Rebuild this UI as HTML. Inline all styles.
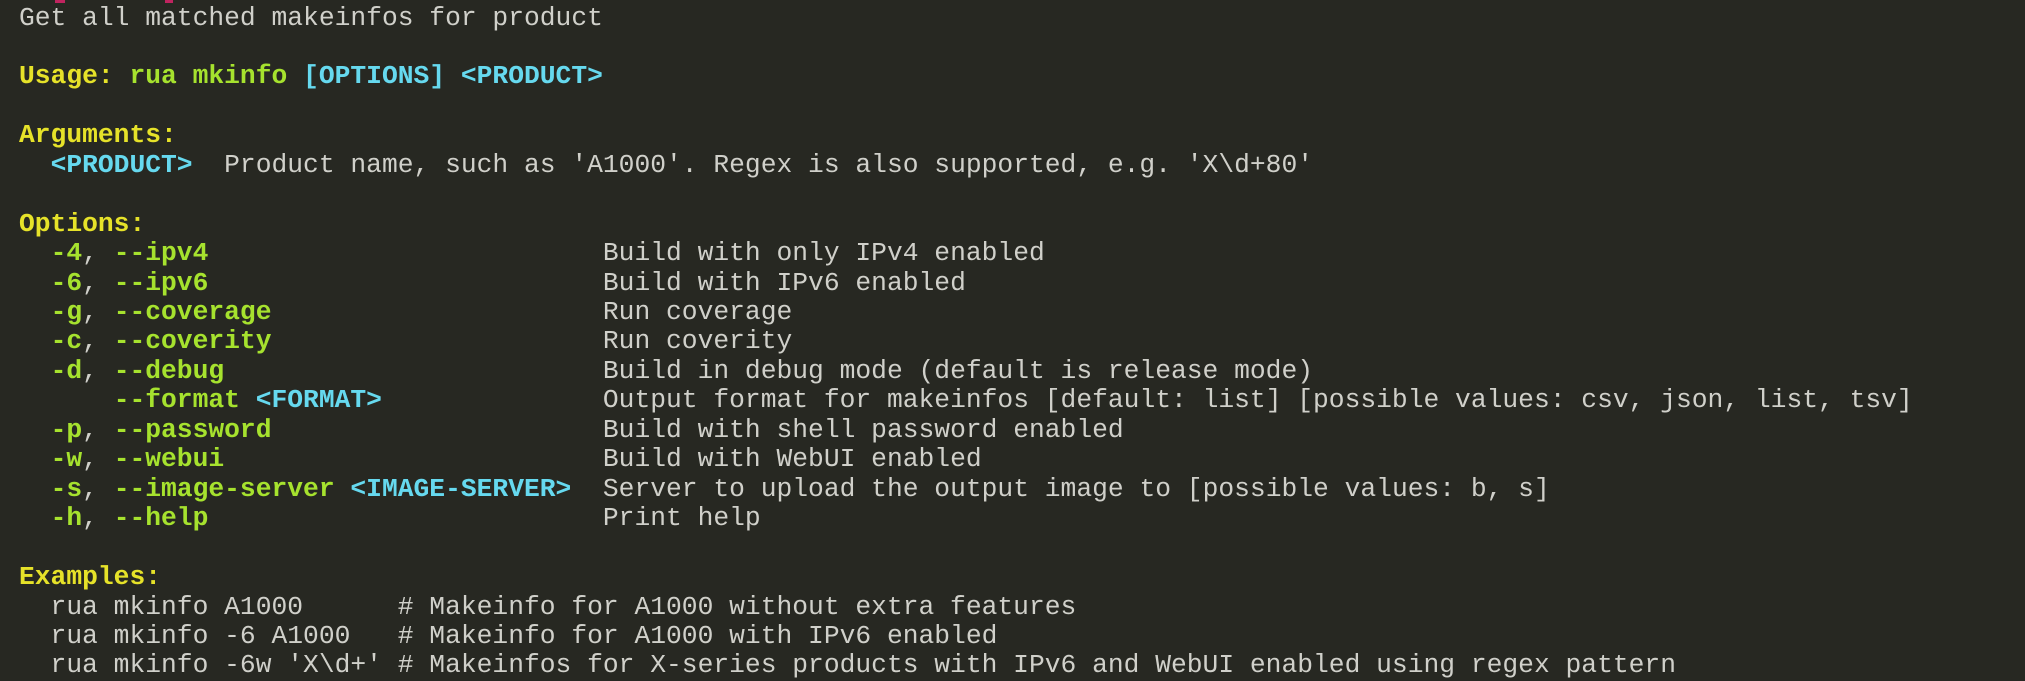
<!DOCTYPE html>
<html><head><meta charset="utf-8"><style>
html,body{margin:0;padding:0;background:#272822;width:2025px;height:679px;overflow:hidden}
pre{margin:0;position:absolute;left:19px;top:3.5px;font-family:"Liberation Mono",monospace;font-size:26.3px;line-height:29.45px;color:#d0d0ca}
.y{color:#e6e229;font-weight:bold}.g{color:#a6e22e;font-weight:bold}.c{color:#66d9ef;font-weight:bold}.cn{color:#66d9ef;font-weight:bold}
.r{position:absolute;top:0;height:3px;background:#c0245f}
</style></head><body>
<div class="r" style="left:55px;width:10px"></div><div class="r" style="left:165px;width:8px"></div>
<pre>Get all matched makeinfos for product

<span class="y">Usage:</span> <span class="g">rua mkinfo</span> <span class="cn">[OPTIONS]</span> <span class="c">&lt;PRODUCT&gt;</span>

<span class="y">Arguments:</span>
  <span class="c">&lt;PRODUCT&gt;</span>  Product name, such as 'A1000'. Regex is also supported, e.g. 'X\d+80'

<span class="y">Options:</span>
  <span class="g">-4</span>, <span class="g">--ipv4</span>                         Build with only IPv4 enabled
  <span class="g">-6</span>, <span class="g">--ipv6</span>                         Build with IPv6 enabled
  <span class="g">-g</span>, <span class="g">--coverage</span>                     Run coverage
  <span class="g">-c</span>, <span class="g">--coverity</span>                     Run coverity
  <span class="g">-d</span>, <span class="g">--debug</span>                        Build in debug mode (default is release mode)
      <span class="g">--format</span> <span class="c">&lt;FORMAT&gt;</span>              Output format for makeinfos [default: list] [possible values: csv, json, list, tsv]
  <span class="g">-p</span>, <span class="g">--password</span>                     Build with shell password enabled
  <span class="g">-w</span>, <span class="g">--webui</span>                        Build with WebUI enabled
  <span class="g">-s</span>, <span class="g">--image-server</span> <span class="c">&lt;IMAGE-SERVER&gt;</span>  Server to upload the output image to [possible values: b, s]
  <span class="g">-h</span>, <span class="g">--help</span>                         Print help

<span class="y">Examples:</span>
  rua mkinfo A1000      # Makeinfo for A1000 without extra features
  rua mkinfo -6 A1000   # Makeinfo for A1000 with IPv6 enabled
  rua mkinfo -6w 'X\d+' # Makeinfos for X-series products with IPv6 and WebUI enabled using regex pattern</pre>
</body></html>
